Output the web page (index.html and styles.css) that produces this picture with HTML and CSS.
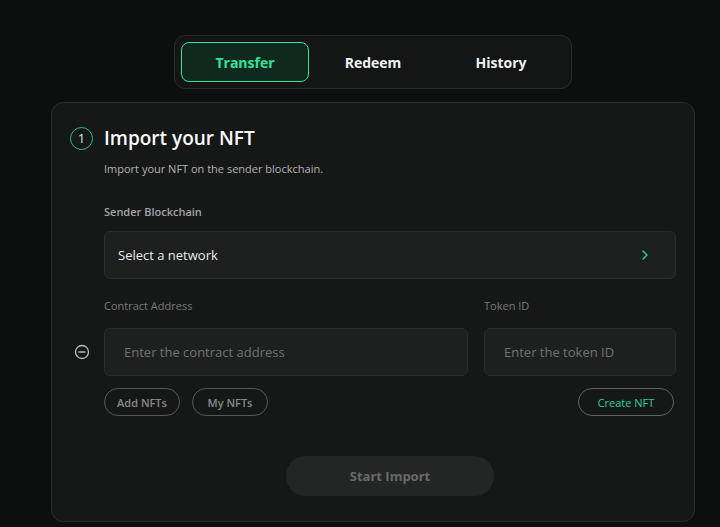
FILE: index.html
```html
<!DOCTYPE html>
<html lang="en">
<head>
  <meta charset="UTF-8">
  <meta name="viewport" content="width=device-width, initial-scale=1.0">
  <title>NFT Bridge</title>
  <link rel="stylesheet" href="styles.css">
</head>
<body>
  <div class="page">
    <div class="tabs">
      <button class="tab active">Transfer</button>
      <button class="tab">Redeem</button>
      <button class="tab">History</button>
    </div>

    <div class="card">
      <div class="step-head">
        <span class="step-num">1</span>
        <h1>Import your NFT</h1>
      </div>
      <div class="step-body">
        <p class="desc">Import your NFT on the sender blockchain.</p>

        <label class="label label-strong">Sender Blockchain</label>
        <div class="select">
          <span>Select a network</span>
          <svg width="12" height="12" viewBox="0 0 12 12" fill="none">
            <path d="M4 2l4 4-4 4" stroke="#22c993" stroke-width="1.6" stroke-linecap="round" stroke-linejoin="round"/>
          </svg>
        </div>

        <div class="fields">
          <div class="field field-address">
            <label class="label">Contract Address</label>
            <div class="input-wrap">
              <svg class="remove" width="16" height="16" viewBox="0 0 16 16" fill="none">
                <circle cx="8" cy="8" r="6.5" stroke="#bbbbbb" stroke-width="1.3"/>
                <path d="M5 8h6" stroke="#bbbbbb" stroke-width="1.3" stroke-linecap="round"/>
              </svg>
              <input type="text" class="input" placeholder="Enter the contract address">
            </div>
          </div>
          <div class="field field-token">
            <label class="label">Token ID</label>
            <input type="text" class="input" placeholder="Enter the token ID">
          </div>
        </div>

        <div class="actions">
          <button class="pill">Add NFTs</button>
          <button class="pill">My NFTs</button>
          <button class="pill pill-green">Create NFT</button>
        </div>

        <div class="start-row">
          <button class="btn-start">Start Import</button>
        </div>
      </div>
    </div>
  </div>
</body>
</html>
```

FILE: styles.css
```css
* {
  margin: 0;
  padding: 0;
  box-sizing: border-box;
}

body {
  background-color: #0d0e0e;
  color: #fff;
  font-family: 'Open Sans', 'DejaVu Sans', sans-serif;
}

.page {
  display: flex;
  flex-direction: column;
  align-items: center;
  padding-top: 35px;
  padding-left: 26px;
}

.tabs {
  width: 398px;
  height: 54px;
  padding: 6px;
  display: flex;
  background-color: #141515;
  border: 1px solid #2a2b2b;
  border-radius: 11px;
}

.tab {
  flex: 1;
  height: 40px;
  border: 1px solid transparent;
  border-radius: 8px;
  background: none;
  color: #f2f2f2;
  font-family: inherit;
  font-size: 14px;
  font-weight: 700;
  cursor: pointer;
}

.tab.active {
  background-color: #10291e;
  border-color: #2fe39c;
  color: #2fe39c;
}

.card {
  width: 644px;
  margin-top: 13px;
  padding: 22px 18px 25px 18px;
  background-color: #161717;
  border: 1px solid #2b2c2c;
  border-radius: 12px;
}

.step-head {
  display: flex;
  align-items: center;
  gap: 11px;
}

.step-num {
  width: 23px;
  height: 23px;
  border: 1.5px solid #21c28f;
  border-radius: 50%;
  display: flex;
  justify-content: center;
  align-items: center;
  font-size: 13px;
  color: #cfeee2;
}

h1 {
  font-size: 19px;
  font-weight: 600;
  color: #fafafa;
}

.step-body {
  padding-left: 34px;
}

.desc {
  margin-top: 10px;
  font-size: 11px;
  color: #b5b5b5;
}

.label {
  display: block;
  font-size: 11px;
  color: #7a7a7a;
}

.label-strong {
  margin-top: 28px;
  color: #a6a6a6;
  font-weight: 600;
}

.select {
  margin-top: 12px;
  height: 48px;
  padding: 0 24px 0 13px;
  background-color: #1e1f1f;
  border: 1px solid #2b2c2c;
  border-radius: 6px;
  display: flex;
  justify-content: space-between;
  align-items: center;
  font-size: 13px;
  color: #ececec;
}

.fields {
  margin-top: 19px;
  display: flex;
  gap: 16px;
}

.field-address {
  flex: 1;
}

.field-token {
  width: 192px;
}

.input-wrap {
  position: relative;
  margin-top: 15px;
}

.remove {
  position: absolute;
  left: -30px;
  top: 16px;
}

.input {
  width: 100%;
  height: 48px;
  margin-top: 15px;
  padding: 0 19px;
  background-color: #1e1f1f;
  border: 1px solid #2b2c2c;
  border-radius: 6px;
  color: #eee;
  font-family: inherit;
  font-size: 13px;
}

.input-wrap .input {
  margin-top: 0;
}

.input::placeholder {
  color: #737373;
}

.input:focus {
  outline: none;
}

.actions {
  margin-top: 12px;
  display: flex;
  gap: 12px;
}

.pill {
  min-width: 76px;
  height: 28px;
  padding: 0 11px;
  background: none;
  border: 1px solid #575757;
  border-radius: 14px;
  color: #8a8a8a;
  font-family: inherit;
  font-size: 11px;
  font-weight: 600;
  cursor: pointer;
}

.pill-green {
  min-width: 96px;
  margin-left: auto;
  margin-right: 2px;
  border-color: #636363;
  color: #24d39a;
  font-weight: 500;
}

.start-row {
  margin-top: 40px;
  display: flex;
  justify-content: center;
}

.btn-start {
  width: 208px;
  height: 40px;
  background-color: #242525;
  border: none;
  border-radius: 20px;
  color: #6a6a6a;
  font-family: inherit;
  font-size: 13px;
  font-weight: 700;
}
```
